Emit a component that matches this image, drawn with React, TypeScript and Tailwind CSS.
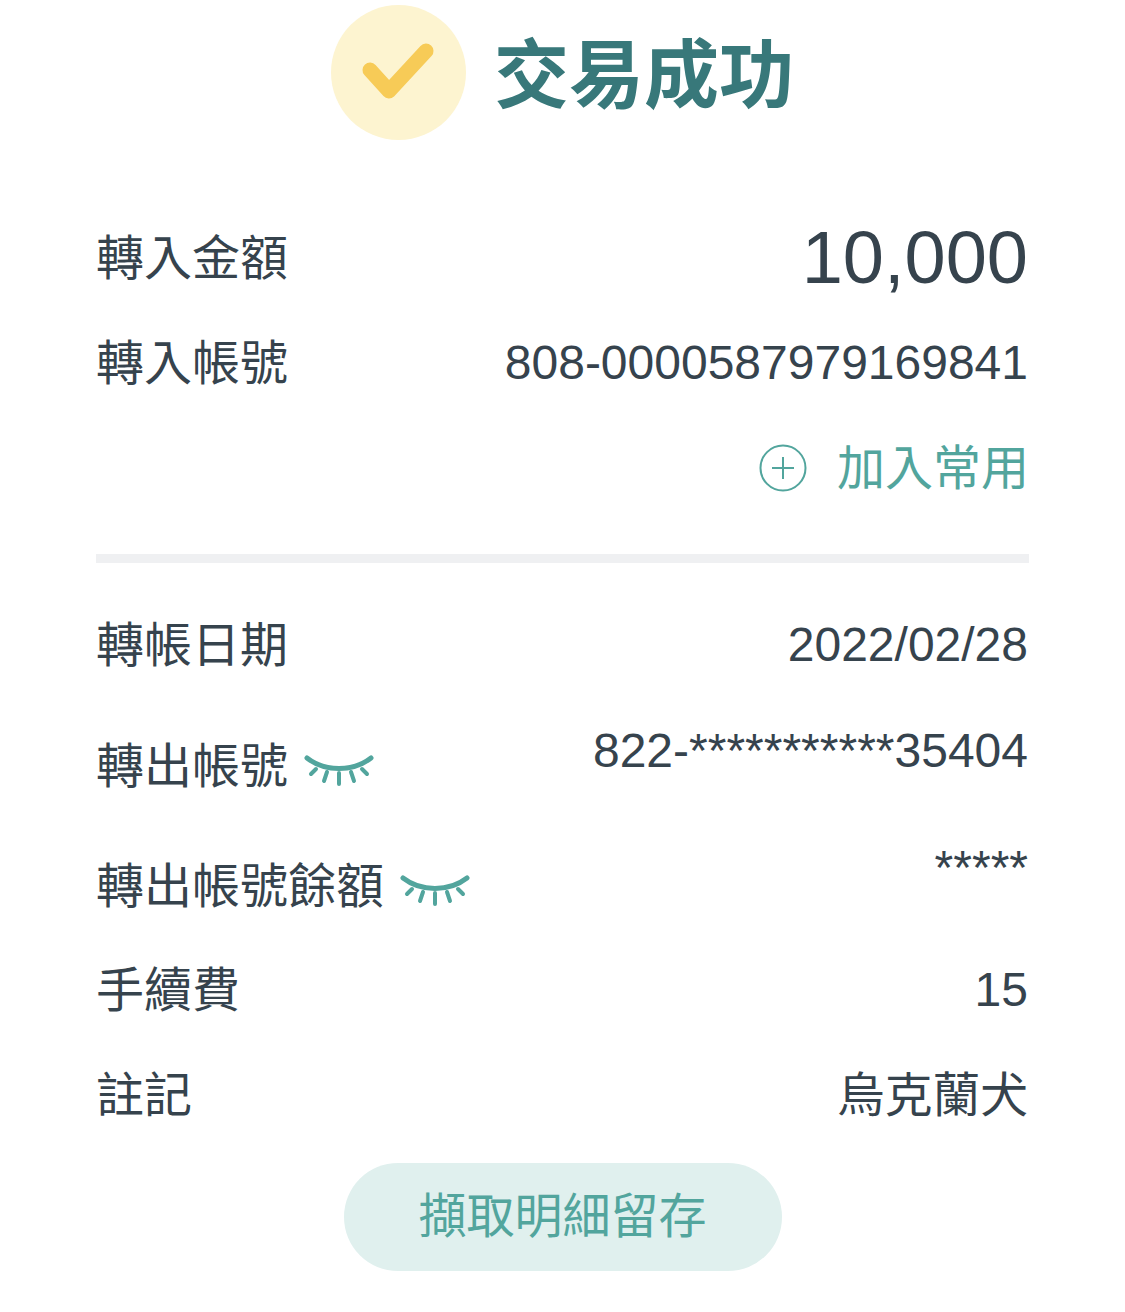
const CJK = "font-['Liberation_Sans','Noto_Sans_CJK_TC',sans-serif]";

function ClosedEye() {
  return (
    <svg width="72" height="34" viewBox="0 0 72 34" fill="none" stroke="#52a59d" strokeLinecap="round" className="mt-[12px] shrink-0">
      <path d="M4 3 C 22 17, 50 17, 68 3" strokeWidth="5" />
      <path d="M8 19 L13 14 M21 26 L24 17 M36 29 L36 18 M51 26 L48 17 M64 19 L59 14" strokeWidth="4" />
    </svg>
  );
}

function Row({ label, value, big, cjkValue }: { label: string; value: string; big?: boolean; cjkValue?: boolean }) {
  return (
    <div className="flex h-[105px] items-center justify-between">
      <span className="-ml-px pt-[3px] text-[48px] leading-none">{label}</span>
      <span className={big ? "text-[74px] leading-none" : cjkValue ? "pt-[3px] text-[47.75px] leading-none" : "pt-[1px] text-[48px] leading-none"}>
        {value}
      </span>
    </div>
  );
}

function HiddenRow({ label, value, offset }: { label: string; value: string; offset: string }) {
  return (
    <div className="flex h-[120px] justify-between">
      <div className="-ml-px flex items-start gap-[15px] pt-[46px]">
        <span className="text-[48px] leading-none">{label}</span>
        <ClosedEye />
      </div>
      <span className={`text-[48px] leading-none ${offset}`}>{value}</span>
    </div>
  );
}

export default function App() {
  return (
    <div className={`${CJK} h-[1312px] w-[1125px] overflow-hidden bg-white px-[97px] text-[#36434d]`}>
      <div className="flex h-[205px] items-start justify-center gap-[28px] pt-[5px]">
        <div className="flex h-[135px] w-[135px] shrink-0 items-center justify-center rounded-full bg-[#fdf4d0]">
          <svg width="135" height="135" viewBox="0 0 135 135" fill="none">
            <path d="M39 65 L58 86 L95 46" stroke="#f7cb57" strokeWidth="15" strokeLinecap="round" strokeLinejoin="round" />
          </svg>
        </div>
        <span className="mt-[4px] text-[75px] font-semibold leading-[135px] text-[#38787a]">交易成功</span>
      </div>

      <Row label="轉入金額" value="10,000" big />
      <Row label="轉入帳號" value="808-0000587979169841" />
      <div className="flex h-[105px] items-center justify-end gap-[30px] text-[#52a59d]">
        <svg width="48" height="48" viewBox="0 0 48 48" fill="none" stroke="#52a59d" strokeWidth="2">
          <circle cx="24" cy="24" r="22.5" />
          <path d="M13 24 H35 M24 13 V35" />
        </svg>
        <span className="-mr-px pt-[2px] text-[48px] leading-none">加入常用</span>
      </div>

      <div className="mx-[-1px] mt-[34px] h-[9px] bg-[#eff0f2]" />

      <div className="mt-[29px]">
        <Row label="轉帳日期" value="2022/02/28" />
        <HiddenRow label="轉出帳號" value="822-***********35404" offset="mt-[30px]" />
        <HiddenRow label="轉出帳號餘額" value="*****" offset="mt-[27px] text-[47.5px]" />
        <Row label="手續費" value="15" />
        <Row label="註記" value="烏克蘭犬" cjkValue />
      </div>

      <button className="mx-auto mt-[16px] flex h-[108px] w-[438px] items-center justify-center rounded-full bg-[#e0f0ee] text-[48px] leading-none text-[#52a59d]">
        擷取明細留存
      </button>
    </div>
  );
}
